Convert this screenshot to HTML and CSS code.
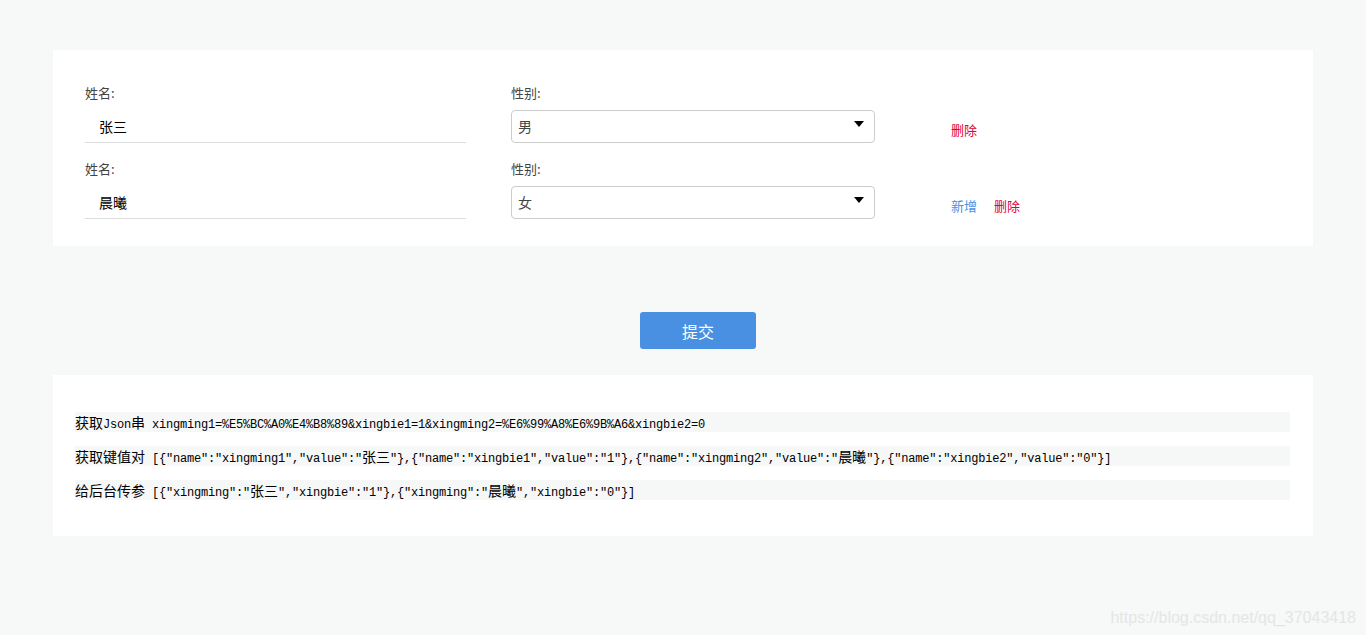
FILE: index.html
```html
<!DOCTYPE html>
<html lang="zh-CN">
<head>
    <meta charset="UTF-8">
    <meta name="viewport" content="width=device-width, initial-scale=1.0">
    <title>动态表单</title>
    <link rel="stylesheet" href="styles.css">
</head>
<body>
    <div class="page">
        <form class="card form-card" id="user-form">
            <div class="form-row">
                <div class="field name-field">
                    <label>姓名:</label>
                    <input type="text" name="xingming1" value="张三">
                </div>
                <div class="field sex-field">
                    <label>性别:</label>
                    <div class="select">
                        <span>男</span>
                        <svg width="10" height="6" viewBox="0 0 10 6"><path d="M0 0h10L5 6z" fill="#000"/></svg>
                    </div>
                </div>
                <div class="actions">
                    <a class="link-del" href="#">删除</a>
                </div>
            </div>
            <div class="form-row">
                <div class="field name-field">
                    <label>姓名:</label>
                    <input type="text" name="xingming2" value="晨曦">
                </div>
                <div class="field sex-field">
                    <label>性别:</label>
                    <div class="select">
                        <span>女</span>
                        <svg width="10" height="6" viewBox="0 0 10 6"><path d="M0 0h10L5 6z" fill="#000"/></svg>
                    </div>
                </div>
                <div class="actions">
                    <a class="link-add" href="#">新增</a>
                    <a class="link-del" href="#">删除</a>
                </div>
            </div>
        </form>

        <div class="submit-bar">
            <button type="button">提交</button>
        </div>

        <div class="card result-card">
            <pre><span class="zh">获取</span>Json<span class="zh">串</span> xingming1=%E5%BC%A0%E4%B8%89&amp;xingbie1=1&amp;xingming2=%E6%99%A8%E6%9B%A6&amp;xingbie2=0</pre>
            <pre><span class="zh">获取键值对</span> [{"name":"xingming1","value":"<span class="zh">张三</span>"},{"name":"xingbie1","value":"1"},{"name":"xingming2","value":"<span class="zh">晨曦</span>"},{"name":"xingbie2","value":"0"}]</pre>
            <pre><span class="zh">给后台传参</span> [{"xingming":"<span class="zh">张三</span>","xingbie":"1"},{"xingming":"<span class="zh">晨曦</span>","xingbie":"0"}]</pre>
        </div>
    </div>

    <div class="watermark">https://blog.csdn.net/qq_37043418</div>
</body>
</html>
```

FILE: styles.css
```css
body {
    margin: 0;
    font-family: "Noto Sans CJK SC", "Noto Sans", sans-serif;
    background-color: #f7f8f8;
    color: #333;
}
.page {
    width: 1260px;
    margin: 0 auto;
    padding-top: 50px;
}
.card {
    background-color: #fff;
}
.form-card {
    padding: 33px 32px 27px;
}
.form-row {
    display: flex;
}
.form-row + .form-row {
    margin-top: 16px;
}
.field label {
    display: block;
    font-size: 13px;
    line-height: 20px;
    color: #444;
    margin-bottom: 7px;
}
.name-field {
    width: 381px;
}
.name-field input {
    display: block;
    box-sizing: border-box;
    width: 381px;
    height: 33px;
    border: none;
    border-bottom: 1px solid #ddd;
    padding: 0 0 0 14px;
    font-family: inherit;
    font-size: 14px;
    color: #000;
    background: transparent;
    outline: none;
}
.sex-field {
    width: 364px;
    margin-left: 45px;
}
.select {
    box-sizing: border-box;
    height: 33px;
    border: 1px solid #ccc;
    border-radius: 4px;
    display: flex;
    align-items: center;
    justify-content: space-between;
    padding: 0 10px 2px 6px;
    font-size: 14px;
    color: #444;
}
.select svg {
    margin-top: -4px;
}
.actions {
    margin-left: 76px;
    padding-top: 37px;
    font-size: 13px;
    line-height: 20px;
}
.actions a {
    text-decoration: none;
}
.actions a + a {
    margin-left: 14px;
}
.link-add {
    color: #4a90e2;
}
.link-del {
    color: #e0003c;
}
.submit-bar {
    display: flex;
    justify-content: center;
    padding: 66px 0 26px;
}
.submit-bar button {
    width: 116px;
    height: 37px;
    margin-left: 30px;
    border: none;
    border-radius: 3px;
    background-color: #4a90e2;
    color: #fff;
    font-family: inherit;
    font-size: 16px;
    cursor: pointer;
}
.result-card {
    padding: 23px 23px 22px 22px;
}
.result-card pre {
    margin: 14px 0;
    height: 20px;
    line-height: 20px;
    background-color: #f6f7f7;
    font-family: "Liberation Mono", monospace;
    font-size: 12px;
    letter-spacing: -0.2px;
    color: #000;
    white-space: pre;
    overflow: hidden;
}
.result-card .zh {
    font-family: "Noto Sans CJK SC", sans-serif;
    font-size: 14px;
    letter-spacing: 0;
}
.watermark {
    position: absolute;
    right: 10px;
    bottom: 8px;
    font-family: "Liberation Sans", sans-serif;
    font-size: 16px;
    color: #e4e6e6;
}
```
